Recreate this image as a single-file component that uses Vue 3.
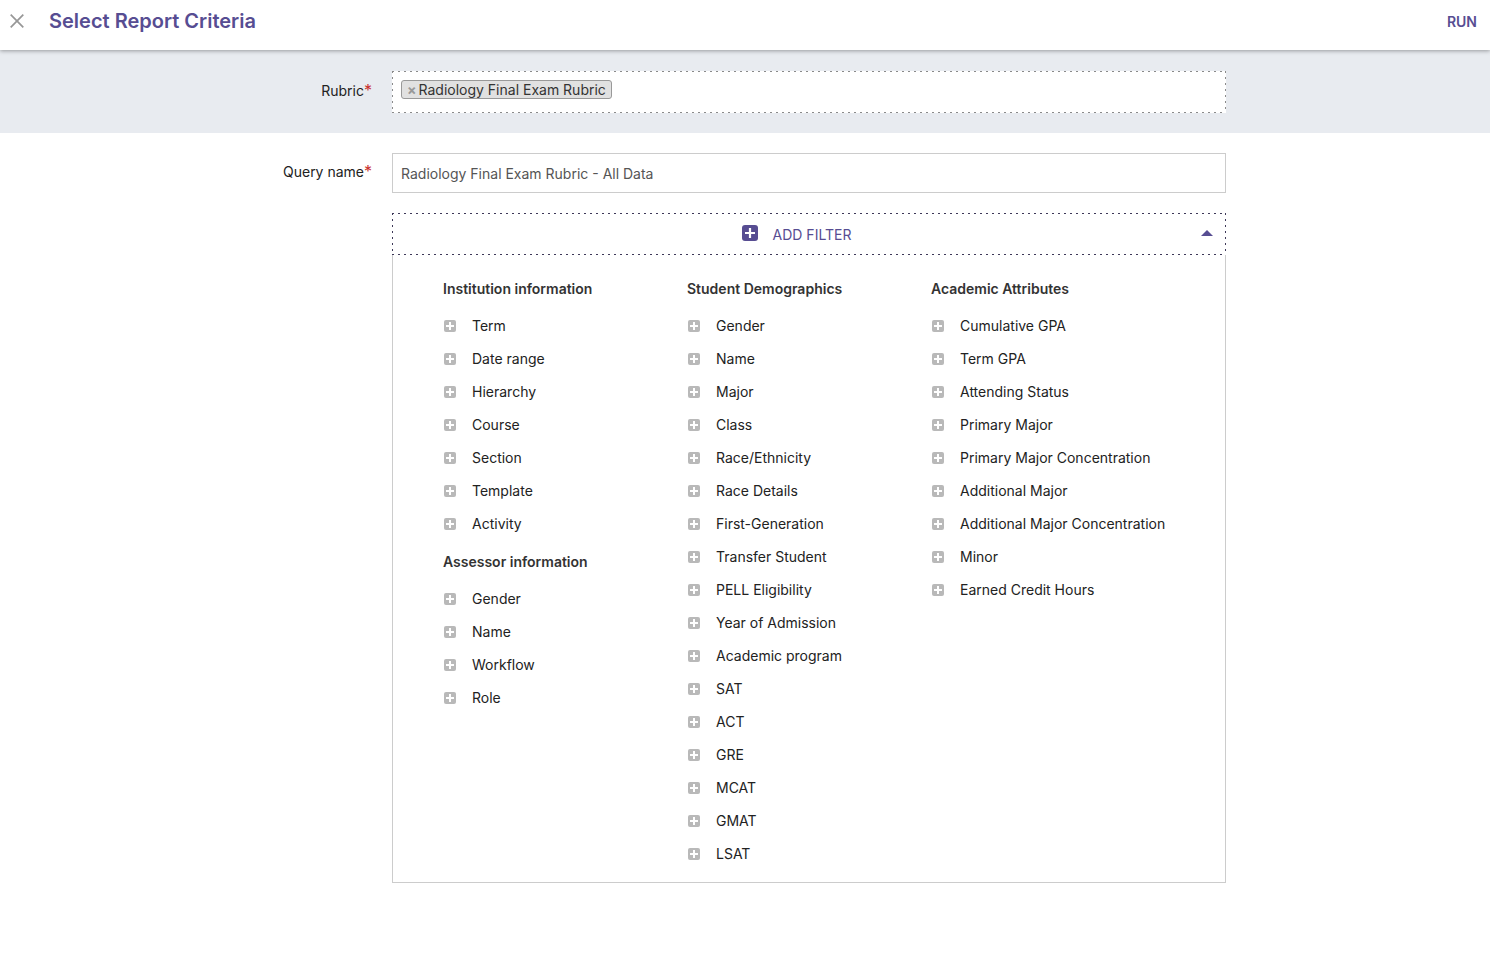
<script setup>
import { ref } from 'vue'

const queryName = ref('Radiology Final Exam Rubric - All Data')
const open = ref(true)

const columns = [
  [
    {
      title: 'Institution information',
      items: ['Term', 'Date range', 'Hierarchy', 'Course', 'Section', 'Template', 'Activity'],
    },
    { title: 'Assessor information', items: ['Gender', 'Name', 'Workflow', 'Role'] },
  ],
  [
    {
      title: 'Student Demographics',
      items: [
        'Gender', 'Name', 'Major', 'Class', 'Race/Ethnicity', 'Race Details',
        'First-Generation', 'Transfer Student', 'PELL Eligibility', 'Year of Admission',
        'Academic program', 'SAT', 'ACT', 'GRE', 'MCAT', 'GMAT', 'LSAT',
      ],
    },
  ],
  [
    {
      title: 'Academic Attributes',
      items: [
        'Cumulative GPA', 'Term GPA', 'Attending Status', 'Primary Major',
        'Primary Major Concentration', 'Additional Major', 'Additional Major Concentration',
        'Minor', 'Earned Credit Hours',
      ],
    },
  ],
]
</script>

<template>
  <div class="page">
    <header class="topbar">
      <button class="close" type="button" aria-label="Close">
        <svg width="14" height="14" viewBox="0 0 14 14">
          <path d="M0.7 0.7L13.3 13.3M13.3 0.7L0.7 13.3" stroke="#979797" stroke-width="1.7" fill="none" />
        </svg>
      </button>
      <h1>Select Report Criteria</h1>
      <button class="run" type="button">RUN</button>
    </header>

    <main>
      <section class="row band">
        <span id="rubric-label" class="label">Rubric<span class="star">*</span></span>
        <div class="tags dashes" role="group" aria-labelledby="rubric-label">
          <span class="tag">
            <button type="button" aria-label="Remove Radiology Final Exam Rubric">×</button>
            <span>Radiology Final Exam Rubric</span>
          </span>
        </div>
      </section>

      <section class="row">
        <label class="label" for="query-name">Query name<span class="star">*</span></label>
        <input id="query-name" v-model="queryName" class="text" type="text" />
      </section>

      <section class="row">
        <div class="filter-box">
          <button class="add dashes" type="button" :aria-expanded="open" @click="open = !open">
            <svg class="add-icon" width="16" height="16" viewBox="0 0 16 16">
              <rect width="16" height="16" rx="3" fill="#574d92" />
              <path d="M8 3V13M3 8H13" stroke="#fff" stroke-width="2.2" />
            </svg>
            <span class="add-text">ADD FILTER</span>
            <svg class="caret" width="12" height="6" viewBox="0 0 12 6">
              <path d="M6 0L12 6H0Z" fill="#574d92" />
            </svg>
          </button>
          <div v-if="open" class="panel">
            <div v-for="(groups, i) in columns" :key="i" class="column">
              <div v-for="group in groups" :key="group.title" class="group">
                <h2>{{ group.title }}</h2>
                <ul>
                  <li v-for="item in group.items" :key="item">
                    <button type="button" class="item">
                      <svg width="12" height="12" viewBox="0 0 12 12">
                        <rect width="12" height="12" rx="2" fill="#b9b9b9" />
                        <path d="M6 2V10M2 6H10" stroke="#fff" stroke-width="2" />
                      </svg>
                      <span>{{ item }}</span>
                    </button>
                  </li>
                </ul>
              </div>
            </div>
          </div>
        </div>
      </section>
    </main>
  </div>
</template>

<style>
body {
  margin: 0;
  background: #fff;
}
</style>

<style scoped>
.page {
  font-family: Inter, "Liberation Sans", sans-serif;
  font-size: 14px;
  line-height: 20px;
  color: #222;
}

button {
  font: inherit;
  color: inherit;
  background: none;
  border: 0;
  padding: 0;
  cursor: pointer;
}

.topbar {
  position: relative;
  display: flex;
  align-items: center;
  box-sizing: border-box;
  height: 50px;
  padding: 0 13px 8px 10px;
  background: #fff;
  box-shadow: 0 1px 4px rgba(0, 0, 0, 0.35);
  color: #574d92;
}

.close {
  display: flex;
}

h1 {
  flex: 1;
  margin: 0 0 0 25px;
  font-size: 20px;
  line-height: 28px;
  font-weight: 600;
}

.run {
  padding-top: 2px;
  font-weight: 600;
}

.row {
  display: grid;
  grid-template-columns: 372fr 834fr 244fr;
  column-gap: 20px;
  padding-top: 20px;
}

.band {
  padding: 21px 0 20px;
  background: #e8ebf0;
}

.label {
  padding-top: 9px;
  text-align: right;
}

.band .label {
  padding-top: 10px;
}

.star {
  color: #c9302c;
  font-size: 16px;
  line-height: 16px;
}

/* Outline of short, widely spaced dashes in --dash */
.dashes {
  background:
    repeating-linear-gradient(90deg, var(--dash) 0 2px, transparent 2px 6px) top / 100% 1px no-repeat,
    repeating-linear-gradient(90deg, var(--dash) 0 2px, transparent 2px 6px) bottom / 100% 1px no-repeat,
    repeating-linear-gradient(var(--dash) 0 2px, transparent 2px 6px) left / 1px 100% no-repeat,
    repeating-linear-gradient(var(--dash) 0 2px, transparent 2px 6px) right / 1px 100% no-repeat,
    #fff;
}

.tags {
  --dash: #8a8a8a;
  box-sizing: border-box;
  min-height: 42px;
  padding: 9px;
}

.tag {
  display: inline-flex;
  align-items: center;
  box-sizing: border-box;
  height: 19px;
  padding: 0 5px;
  border: 1px solid #999;
  border-radius: 3px;
  background: #e1e1e1;
  color: #333;
  vertical-align: top;
}

.tag button {
  margin-right: 2px;
  color: #999;
  font-weight: 700;
}

.text {
  box-sizing: border-box;
  width: 100%;
  height: 40px;
  padding: 0 8px;
  border: 1px solid #ccc;
  background: #fff;
  color: #555;
  font: inherit;
}

.filter-box {
  grid-column: 2;
}

.add {
  --dash: #3d3858;
  display: flex;
  align-items: center;
  box-sizing: border-box;
  width: 100%;
  height: 42px;
  padding: 0 13px 0 0;
  color: #574d92;
}

.add-icon {
  margin: 0 15px 2px auto;
}

.add-text {
  padding-top: 2px;
}

.caret {
  margin: 0 0 2px auto;
}

.panel {
  display: grid;
  grid-template-columns: repeat(3, 1fr);
  padding: 24px 50px 12px;
  border: 1px solid #ccc;
  border-top: 0;
}

h2 {
  margin: 0 0 10px;
  font-size: 14px;
  line-height: 20px;
  font-weight: 600;
  color: #333;
}

ul {
  margin: 0;
  padding: 0;
  list-style: none;
}

.group + .group {
  margin-top: 12px;
}

.item {
  display: flex;
  align-items: center;
  gap: 16px;
  height: 33px;
  padding-left: 1px;
  white-space: nowrap;
}
</style>
